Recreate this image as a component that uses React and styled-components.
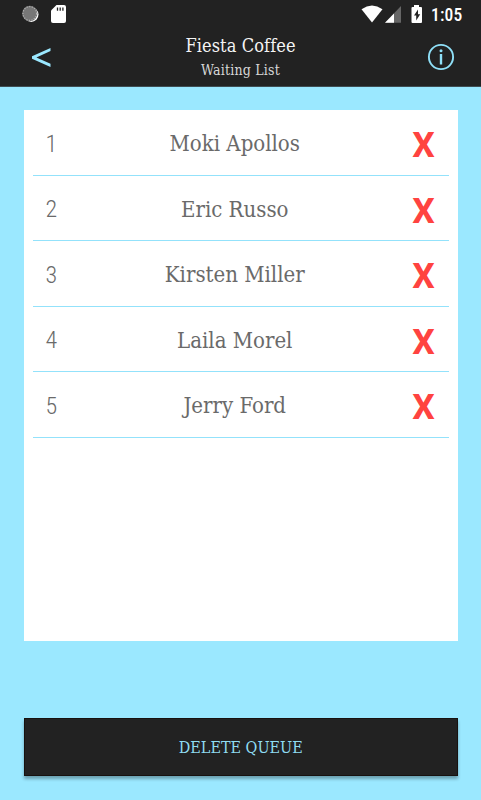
import styled, { createGlobalStyle } from "styled-components";

import { useState } from "react";

const GUESTS = ["Moki Apollos", "Eric Russo", "Kirsten Miller", "Laila Morel", "Jerry Ford"];

const StatusIcons = () => {
    return (
        <StatusBar>
            <svg width="70" height="28" viewBox="0 0 70 28">
                <circle cx="31.2" cy="14.6" r="7.3" fill="#fff" />
                <circle cx="29.8" cy="13.5" r="7.7" fill="#777" />
                <circle cx="29.8" cy="13.5" r="6.8" fill="none" stroke="#b5b5b5" strokeWidth="1.2" strokeDasharray="1.1 1.5" />
                <path d="M56.5 5H64a2 2 0 0 1 2 2v14a2 2 0 0 1-2 2H53a2 2 0 0 1-2-2V10.5Z" fill="#fff" />
                <path d="M57.5 7.5v3.2M60.2 7.5v3.2M62.9 7.5v3.2" stroke="#222" strokeWidth="1.3" />
            </svg>
            <StatusRight>
                <svg width="63" height="28" viewBox="360 0 63 28">
                    <path d="M361.5 9.2Q372 1.8 382.5 9.2L372 22.5Z" fill="#fff" />
                    <path d="M401 6V22.8H385Z" fill="#666" />
                    <path d="M394 13.4V22.8H385Z" fill="#fff" />
                    <path d="M414 5h5v2h2a1 1 0 0 1 1 1v14a1 1 0 0 1-1 1h-8.5a1 1 0 0 1-1-1V8a1 1 0 0 1 1-1H414Z" fill="#fff" />
                    <path d="M418 9.5l-4 6h2.200V20.500l4-6.300h-2.200Z" fill="#222" />
                </svg>
                <Clock>1:05</Clock>
            </StatusRight>
        </StatusBar>
    )
}

const App = () => {
    const [guests, setGuests] = useState(GUESTS);

    const removeGuest = (name) => setGuests(guests.filter((guest) => guest !== name));

    return (
        <Screen>
            <GlobalStyle />
            <Header>
                <StatusIcons />
                <TitleBar>
                    <IconButton aria-label="Back">
                        <svg width="20" height="22" viewBox="31 46 20 22">
                            <path d="M50.500 48v3.100L36.400 57.400 50.500 63.700v3.200L32 58.700v-2.500Z" fill="#9be8ff" />
                        </svg>
                    </IconButton>
                    <Titles>
                        <h1>Fiesta Coffee</h1>
                        <p>Waiting List</p>
                    </Titles>
                    <IconButton aria-label="Info">
                        <svg width="28" height="28" viewBox="0 0 28 28" fill="none" stroke="#8fe0f8">
                            <circle cx="14" cy="14" r="12.1" strokeWidth="1.9" />
                            <path d="M14 11v10.500" strokeWidth="2.4" />
                            <circle cx="14" cy="7.8" r="1.5" fill="#8fe0f8" stroke="none" />
                        </svg>
                    </IconButton>
                </TitleBar>
            </Header>

            <Queue>
                {guests.map((name, index) => (
                    <Row key={name}>
                        <Place>{index + 1}</Place>
                        <Name>{name}</Name>
                        <Remove onClick={() => removeGuest(name)}>X</Remove>
                    </Row>
                ))}
            </Queue>

            <DeleteButton onClick={() => setGuests([])}>DELETE QUEUE</DeleteButton>
        </Screen>
    )
}

export default App;

const GlobalStyle = createGlobalStyle`
* {
    box-sizing: border-box;
}
body {
    margin: 0;
    background-color: #9be8ff;
}
`;

const slab = `"Roboto Slab", "DejaVu Serif Condensed", "DejaVu Serif", serif`;

const Screen = styled.main`
display:flex;
flex-direction:column;
height:800px;
background-color:#9be8ff;
font-family:${slab};
font-stretch:condensed;
`;

const Header = styled.header`
height:87px;
background-color:#222;
border-bottom:1px solid #3f4d52;
`;

const StatusBar = styled.div`
display:flex;
justify-content:space-between;
height:28px;
`;

const StatusRight = styled.div`
display:flex;
align-items:center;
padding-right:18px;
`;

const Clock = styled.span`
width:40px;
padding-left:8px;
color:#fff;
font-family:Roboto, sans-serif;
font-size:17.5px;
font-weight:500;
letter-spacing:0.2px;
line-height:28px;
padding-top:2px;
`;

const TitleBar = styled.div`
display:flex;
align-items:center;
justify-content:space-between;
height:58px;
padding:0 26px 0 31px;
`;

const IconButton = styled.button`
display:flex;
width:28px;
padding:0;
border:none;
background:none;
cursor:pointer;
`;

const Titles = styled.div`
padding:0 5px 0 0;
text-align:center;
white-space:nowrap;

h1{
    margin:0;
    color:#f4f4f4;
    font-size:18px;
    font-weight:400;
    letter-spacing:0.1px;
    line-height:26px;
}
p{
    margin:0;
    color:#d8d8d8;
    font-size:14px;
    letter-spacing:0.2px;
    line-height:23px;
}
`;

const Queue = styled.section`
height:531px;
margin:23px 23px 0 23.5px;
padding:0 9px;
background-color:#fff;
`;

const Row = styled.div`
display:grid;
grid-template-columns:80px 1fr 92px;
align-items:center;
height:65.5px;
border-bottom:1px solid #93e2fb;
`;

const Place = styled.span`
padding:3px 0 0 13px;
color:#6a6a6a;
font-family:"Roboto Slab", Roboto, sans-serif;
font-size:24px;
font-weight:300;
`;

const Name = styled.span`
padding-top:3px;
color:#6a6a6a;
font-size:22px;
text-align:center;
white-space:nowrap;
`;

const Remove = styled.button`
justify-self:end;
width:51px;
padding:6px 0 0;
border:none;
background:none;
color:#ff4340;
font-family:Roboto, sans-serif;
font-size:35.5px;
font-weight:700;
line-height:40px;
cursor:pointer;
`;

const DeleteButton = styled.button`
height:58px;
margin:77px 23px 0 23.5px;
border:1px solid #171210;
background-color:#222;
box-shadow:0 3px 3px rgba(0, 0, 0, 0.3);
color:#8fdcf2;
font-family:${slab};
font-size:16px;
font-stretch:condensed;
cursor:pointer;
`;
